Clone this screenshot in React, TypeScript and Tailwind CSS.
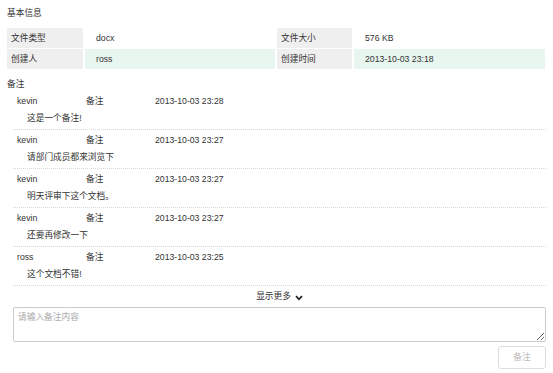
import React from "react";

const notes = [
  { name: "kevin", date: "2013-10-03 23:28", text: "这是一个备注!" },
  { name: "kevin", date: "2013-10-03 23:27", text: "请部门成员都来浏览下" },
  { name: "kevin", date: "2013-10-03 23:27", text: "明天评审下这个文档。" },
  { name: "kevin", date: "2013-10-03 23:27", text: "还要再修改一下" },
  { name: "ross", date: "2013-10-03 23:25", text: "这个文档不错!" },
];

export default function App() {
  return (
    <div
      className="w-[553px] h-[373px] bg-white text-[#333] text-[8.7px] overflow-hidden"
      style={{ fontFamily: '"Liberation Sans", "Noto Sans CJK SC", sans-serif' }}
    >
      <div className="pl-[7px] pt-[6px] leading-[14px]">基本信息</div>
      <div className="ml-[7px] mt-[8px] w-[539px] grid grid-cols-[76px_190px_75px_191px] gap-x-[2px] gap-y-[1px] leading-[20px]">
        <div className="bg-[#efefef] pl-[4px] h-[20px]">文件类型</div>
        <div className="bg-white pl-[11px] h-[20px]">docx</div>
        <div className="bg-[#efefef] pl-[4px] h-[20px]">文件大小</div>
        <div className="bg-white pl-[11px] h-[20px]">576 KB</div>
        <div className="bg-[#efefef] pl-[4px] h-[20px]">创建人</div>
        <div className="bg-[#e9f5ef] pl-[11px] h-[20px]">ross</div>
        <div className="bg-[#efefef] pl-[4px] h-[20px]">创建时间</div>
        <div className="bg-[#e9f5ef] pl-[11px] h-[20px]">2013-10-03 23:18</div>
      </div>
      <div className="pl-[7px] mt-[8px] leading-[14px]">备注</div>
      <div className="ml-[13px] w-[533px]">
        {notes.map((n, i) => (
          <div
            key={i}
            className="pt-[2px] pb-[2px] border-b border-dotted border-[#d8d8d8]"
          >
            <div className="flex h-[17px] leading-[17px] pl-[4px]">
              <span className="w-[69px]">{n.name}</span>
              <span className="w-[69px]">备注</span>
              <span>{n.date}</span>
            </div>
            <div className="h-[17px] leading-[17px] pl-[14px]">{n.text}</div>
          </div>
        ))}
        <div className="flex items-center justify-center h-[20px] mt-[1px] gap-[4px]">
          <span>显示更多</span>
          <svg width="8" height="6" viewBox="0 0 8 6" className="mt-[1px]">
            <path d="M1 1.2 L4 4.3 L7 1.2" stroke="#222" strokeWidth="1.8" fill="none" />
          </svg>
        </div>
        <textarea
          className="block w-[533px] h-[35px] border border-[#ccc] rounded-[2px] px-[4px] py-[3px] text-[8.7px] leading-[12px] placeholder:text-[#aaa] outline-none resize-y"
          style={{ fontFamily: '"Liberation Sans", "Noto Sans CJK SC", sans-serif' }}
          placeholder="请输入备注内容"
        />
        <div className="flex justify-end mt-[4px]">
          <button className="w-[48px] h-[23px] border border-[#ddd] rounded-[3px] text-[#bbb] text-[8.7px] bg-white">
            备注
          </button>
        </div>
      </div>
    </div>
  );
}
